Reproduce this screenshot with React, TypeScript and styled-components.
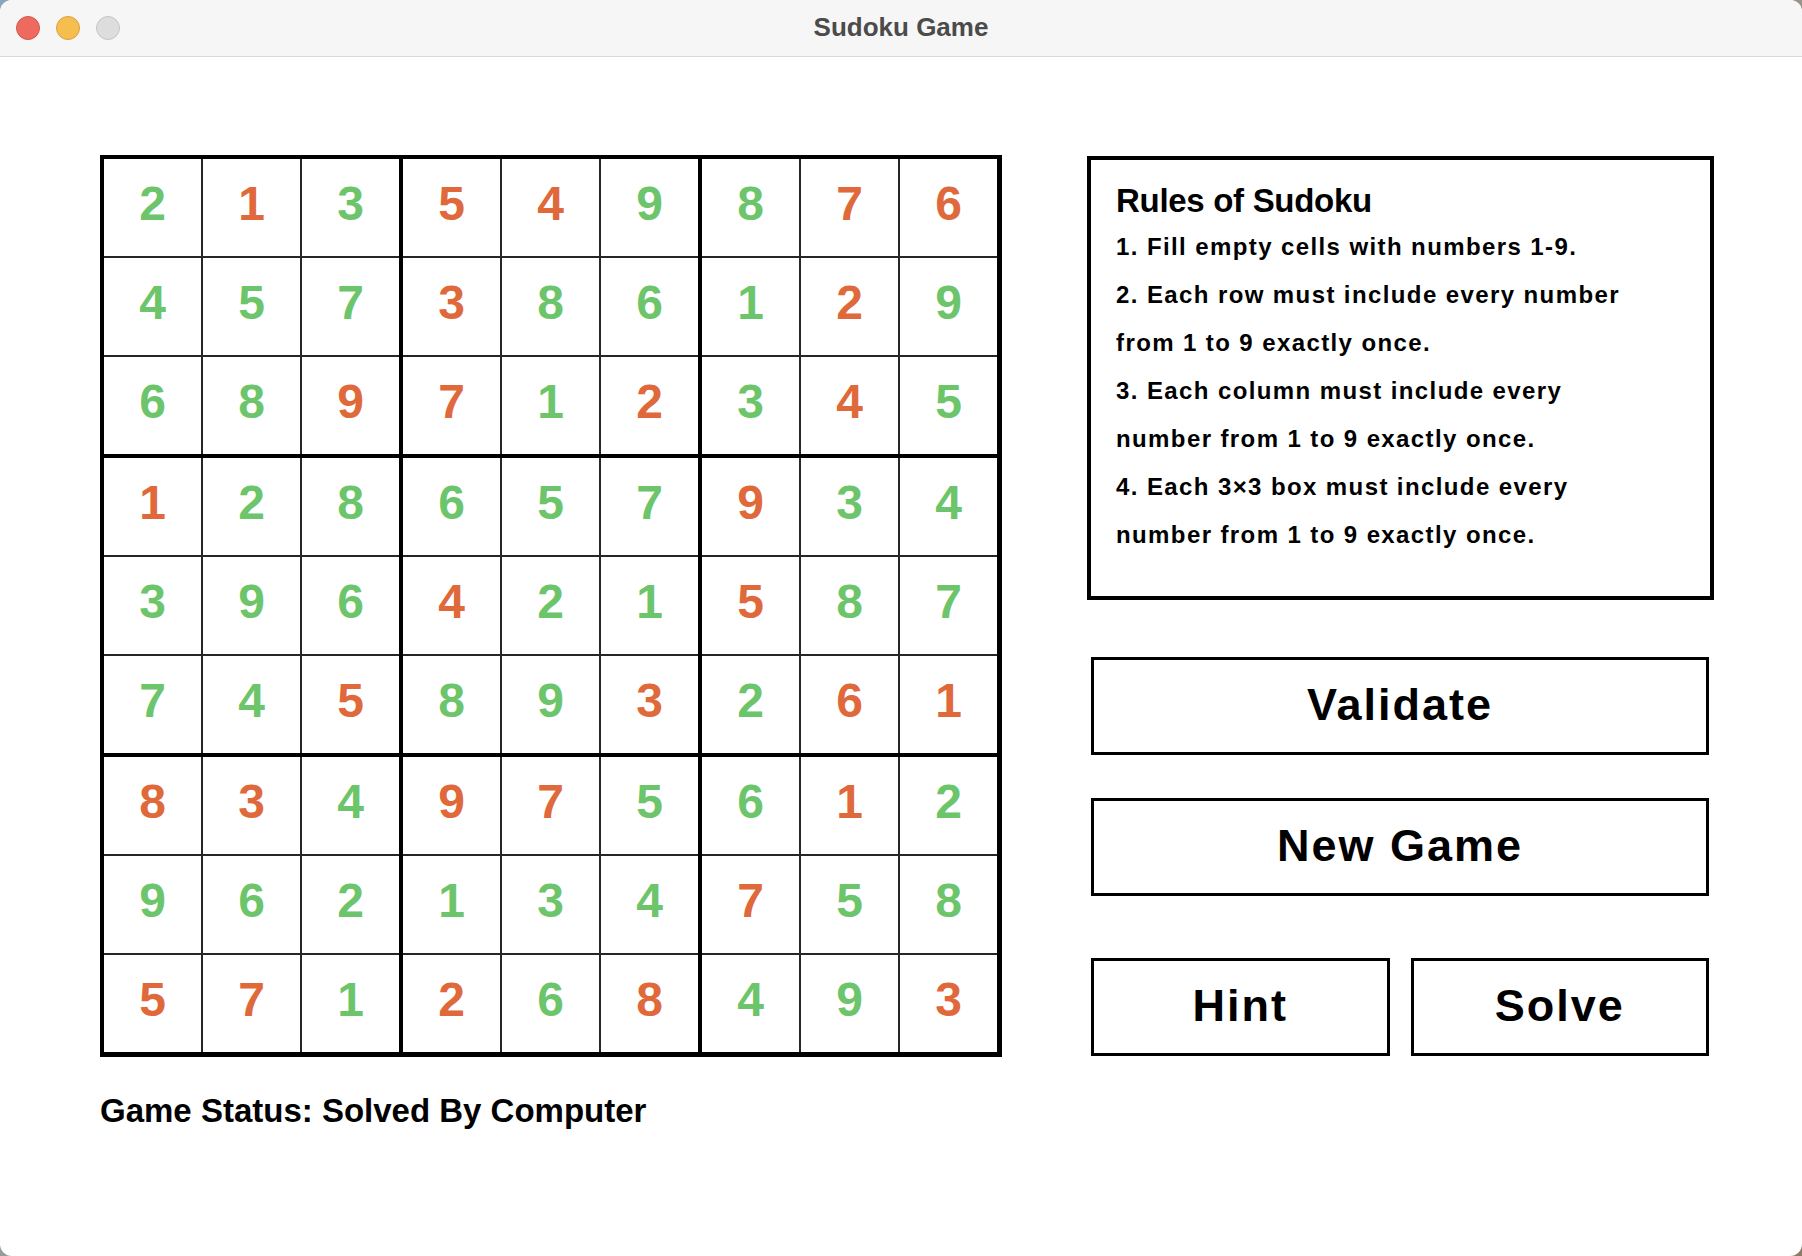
import React from "react";
import styled, { createGlobalStyle } from "styled-components";

const GlobalStyle = createGlobalStyle`
  html, body {
    margin: 0;
    padding: 0;
  }
  body {
    width: 1802px;
    height: 1256px;
    overflow: hidden;
    background: linear-gradient(135deg, #8ea3c2 0%, #9a9a90 50%, #8c7c62 100%);
    font-family: "Liberation Sans", Arial, sans-serif;
  }
`;

const solution = [
  [2, 1, 3, 5, 4, 9, 8, 7, 6],
  [4, 5, 7, 3, 8, 6, 1, 2, 9],
  [6, 8, 9, 7, 1, 2, 3, 4, 5],
  [1, 2, 8, 6, 5, 7, 9, 3, 4],
  [3, 9, 6, 4, 2, 1, 5, 8, 7],
  [7, 4, 5, 8, 9, 3, 2, 6, 1],
  [8, 3, 4, 9, 7, 5, 6, 1, 2],
  [9, 6, 2, 1, 3, 4, 7, 5, 8],
  [5, 7, 1, 2, 6, 8, 4, 9, 3],
];

// G = given by the puzzle, O = filled by the solver
const origin = [
  "GOGOOGGOO",
  "GGGOGGGOG",
  "GGOOGOGOG",
  "OGGGGGOGG",
  "GGGOGGOGG",
  "GGOGGOGOO",
  "OOGOOGGOG",
  "GGGGGGOGG",
  "OOGOGOGGO",
];

const rules = [
  "1. Fill empty cells with numbers 1-9.",
  "2. Each row must include every number",
  "from 1 to 9 exactly once.",
  "3. Each column must include every",
  "number from 1 to 9 exactly once.",
  "4. Each 3\u00d73 box must include every",
  "number from 1 to 9 exactly once.",
];

const Window = styled.div`
  width: 1802px;
  height: 1256px;
  background: #ffffff;
  border-radius: 12px;
  overflow: hidden;
  display: flex;
  flex-direction: column;
`;

const TitleBar = styled.div`
  position: relative;
  height: 56px;
  flex-shrink: 0;
  background: #f6f6f6;
  border-bottom: 1px solid #d9d9d9;
  display: flex;
  align-items: center;
  justify-content: center;
`;

const Lights = styled.div`
  position: absolute;
  left: 16px;
  top: 16px;
  display: flex;
  gap: 16px;
`;

const Light = styled.span<{ $fill: string; $edge: string }>`
  width: 22px;
  height: 22px;
  border-radius: 50%;
  background: ${(p) => p.$fill};
  border: 1px solid ${(p) => p.$edge};
`;

const Title = styled.div`
  font-size: 26px;
  font-weight: 700;
  color: #4b4b4b;
  margin-top: -2px;
`;

const Main = styled.div`
  display: flex;
  padding: 98px 0 0 100px;
  gap: 85px;
`;

const LeftColumn = styled.div`
  display: flex;
  flex-direction: column;
`;

const Board = styled.div`
  display: grid;
  grid-template-columns: repeat(3, auto);
  gap: 4px;
  padding: 4px 5px 5px 4px;
  background: #000000;
  width: max-content;
`;

const Box = styled.div`
  display: grid;
  grid-template-columns: repeat(3, 97px);
  grid-auto-rows: 97px;
  gap: 2px;
  background: #262626;
`;

const Cell = styled.div<{ $solved: boolean }>`
  background: #ffffff;
  display: flex;
  align-items: center;
  justify-content: center;
  font-size: 48px;
  font-weight: 700;
  padding-bottom: 8px;
  box-sizing: border-box;
  color: ${(p) => (p.$solved ? "#e0693b" : "#6dc56b")};
`;

const Status = styled.div`
  margin-top: 37px;
  font-size: 33px;
  line-height: 33px;
  font-weight: 700;
  color: #000000;
`;

const RightColumn = styled.div`
  width: 627px;
  display: flex;
  flex-direction: column;
  padding-top: 1px;
`;

const RulesBox = styled.div`
  height: 444px;
  box-sizing: border-box;
  border: 4px solid #000000;
  padding: 24px 0 0 25px;
`;

const RulesTitle = styled.div`
  font-size: 33px;
  line-height: 33px;
  font-weight: 700;
  letter-spacing: -0.3px;
  margin-bottom: 6px;
`;

const RuleLine = styled.div`
  font-size: 24px;
  line-height: 48px;
  font-weight: 700;
  letter-spacing: 1.4px;
  white-space: nowrap;
`;

const ButtonStack = styled.div`
  display: flex;
  flex-direction: column;
  padding: 0 5px 0 4px;
`;

const Button = styled.button<{ $top: number }>`
  margin-top: ${(p) => p.$top}px;
  height: 98px;
  width: 100%;
  box-sizing: border-box;
  background: #ffffff;
  border: 3px solid #000000;
  border-radius: 0;
  font-family: "Liberation Sans", Arial, sans-serif;
  font-size: 45px;
  font-weight: 700;
  letter-spacing: 2px;
  color: #000000;
  padding: 0 0 2px 0;
  cursor: pointer;
`;

const ButtonRow = styled.div`
  display: grid;
  grid-template-columns: 1fr 1fr;
  gap: 21px;
`;

export default function App() {
  const boxes = Array.from({ length: 9 }, (_, b) => b);

  return (
    <>
      <GlobalStyle />
      <Window>
        <TitleBar>
          <Lights>
            <Light $fill="#ee6a5f" $edge="#d5574c" />
            <Light $fill="#f5be4f" $edge="#d9a23e" />
            <Light $fill="#dddddd" $edge="#c5c5c5" />
          </Lights>
          <Title>Sudoku Game</Title>
        </TitleBar>
        <Main>
          <LeftColumn>
            <Board>
              {boxes.map((b) => (
                <Box key={b}>
                  {Array.from({ length: 9 }, (_, i) => {
                    const r = Math.floor(b / 3) * 3 + Math.floor(i / 3);
                    const c = (b % 3) * 3 + (i % 3);
                    return (
                      <Cell key={i} $solved={origin[r][c] === "O"}>
                        {solution[r][c]}
                      </Cell>
                    );
                  })}
                </Box>
              ))}
            </Board>
            <Status>Game Status: Solved By Computer</Status>
          </LeftColumn>
          <RightColumn>
            <RulesBox>
              <RulesTitle>Rules of Sudoku</RulesTitle>
              {rules.map((line) => (
                <RuleLine key={line}>{line}</RuleLine>
              ))}
            </RulesBox>
            <ButtonStack>
              <Button $top={57}>Validate</Button>
              <Button $top={43}>New Game</Button>
              <ButtonRow>
                <Button $top={62}>Hint</Button>
                <Button $top={62}>Solve</Button>
              </ButtonRow>
            </ButtonStack>
          </RightColumn>
        </Main>
      </Window>
    </>
  );
}
